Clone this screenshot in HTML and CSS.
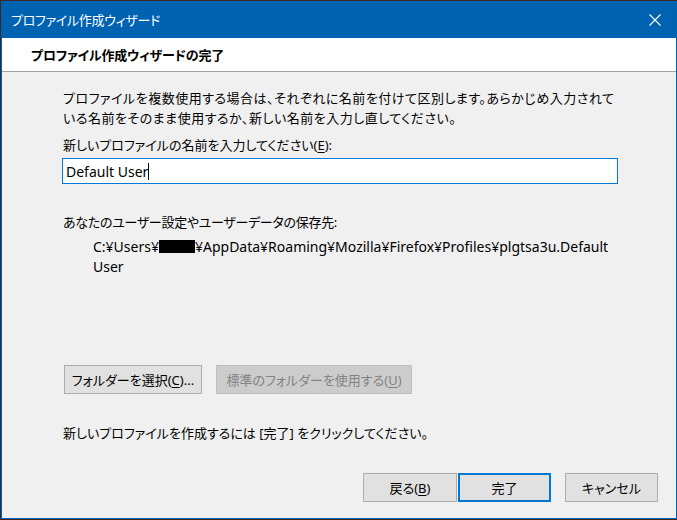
FILE: index.html
```html
<!DOCTYPE html>
<html lang="ja">
<head>
<meta charset="utf-8">
<title>プロファイル作成ウィザード</title>
<link rel="stylesheet" href="styles.css">
</head>
<body>
<div class="window">
  <div class="titlebar">
    <span class="title">プロファイル作成ウィザード</span>
    <span class="close">
      <svg width="12" height="12" viewBox="0 0 12 12"><path d="M0.5 0.5 L11.5 11.5 M11.5 0.5 L0.5 11.5" stroke="#fff" stroke-width="1.1" fill="none"/></svg>
    </span>
  </div>
  <div class="header">プロファイル作成ウィザードの完了</div>
  <div class="content">
    <p class="para">プロファイルを複数使用する場合は、それぞれに名前を付けて区別します。あらかじめ入力されて<br>いる名前をそのまま使用するか、新しい名前を入力し直してください。</p>
    <p class="label">新しいプロファイルの名前を入力してください(<u>E</u>):</p>
    <div class="input"><span class="value">Default User</span><span class="caret"></span></div>
    <p class="label2">あなたのユーザー設定やユーザーデータの保存先:</p>
    <p class="path">C:¥Users¥<span class="redact"></span>¥AppData¥Roaming¥Mozilla¥Firefox¥Profiles¥plgtsa3u.Default<br>User</p>
    <div class="btnrow">
      <span class="btn choose">フォルダーを選択(<u>C</u>)...</span>
      <span class="btn disabled">標準のフォルダーを使用する(<u>U</u>)</span>
    </div>
    <p class="note">新しいプロファイルを作成するには [完了] をクリックしてください。</p>
  </div>
  <div class="footer">
    <span class="btn back">戻る(<u>B</u>)</span>
    <span class="btn finish">完了</span>
    <span class="btn cancel">キャンセル</span>
  </div>
</div>
</body>
</html>
```
FILE: styles.css
```css
html, body {
  margin: 0;
  padding: 0;
}
body {
  background: #3a2a27;
  width: 677px;
  height: 520px;
  overflow: hidden;
  font-family: "Noto Sans", "Noto Sans CJK JP", sans-serif;
  font-size: 13px;
  font-feature-settings: "palt";
  color: #000;
}
p { margin: 0; }
u { text-underline-offset: 2px; }
.window {
  box-sizing: border-box;
  margin: 1px 0 0 1px;
  width: 676px;
  height: 518px;
  background: #f0f0f0;
  border: 1px solid #0063b1;
  border-top: 0;
  display: flex;
  flex-direction: column;
}
.titlebar {
  height: 37px;
  background: #0063b1;
  color: #fff;
  display: flex;
  align-items: center;
  justify-content: space-between;
  padding-left: 10px;
  margin: 0 -1px;
}
.title { font-size: 13px; letter-spacing: -0.3px; }
.close {
  width: 44px;
  height: 37px;
  display: flex;
  align-items: center;
  justify-content: center;
  padding-top: 1px;
  box-sizing: border-box;
}
.header {
  height: 34px;
  background: #fff;
  border-bottom: 1px solid #a0a0a0;
  box-sizing: border-box;
  padding-left: 29px;
  display: flex;
  align-items: center;
  font-weight: bold;
  font-size: 13px;
  letter-spacing: -0.2px;
}
.content {
  padding: 16px 0 0 61px;
}
.para, .label, .label2, .path, .note {
  line-height: 20px;
  white-space: nowrap;
}
.para { letter-spacing: 0.5px; }
.label { margin-top: 7px; }
.input {
  box-sizing: border-box;
  margin: 3px 0 0 -1px;
  width: 556px;
  height: 26px;
  background: #fff;
  border: 1px solid #0078d7;
  display: flex;
  align-items: center;
  padding-left: 3px;
  font-size: 14px;
}
.caret {
  display: inline-block;
  width: 1px;
  height: 17px;
  background: #000;
}
.label2 { margin-top: 28px; letter-spacing: -0.3px; }
.path {
  margin-top: 5px;
  padding-left: 30px;
  font-size: 14px;
}
.redact {
  display: inline-block;
  width: 36px;
  height: 13px;
  background: #000;
  vertical-align: -1px;
}
.btnrow {
  margin-top: 88px;
  display: flex;
  gap: 14px;
}
.btn {
  box-sizing: border-box;
  height: 29px;
  display: inline-flex;
  align-items: center;
  justify-content: center;
  background: #e1e1e1;
  border: 1px solid #adadad;
  white-space: nowrap;
}
.choose { width: 138px; margin-left: 1px; }
.disabled {
  width: 196px;
  background: #cccccc;
  border-color: #bfbfbf;
  color: #838383;
}
.note { margin-top: 29px; }
.footer {
  margin-top: 30px;
  display: flex;
  justify-content: flex-end;
  padding-right: 18px;
}
.back { width: 94px; }
.finish {
  width: 93px;
  margin-left: 1px;
  border: 2px solid #0078d7;
}
.cancel { width: 93px; margin-left: 14px; }
```
